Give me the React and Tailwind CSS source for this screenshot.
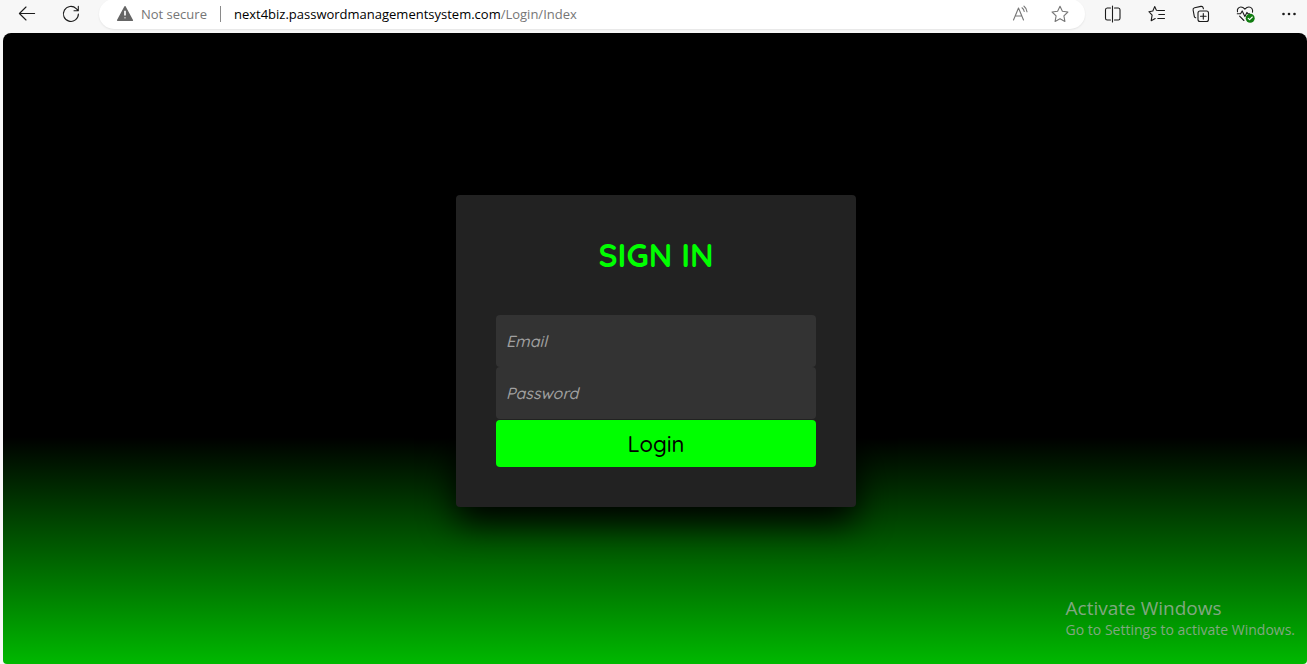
import React from "react";

function Icon({ children, className = "text-[#1b1b1b]" }) {
  return (
    <svg
      viewBox="0 0 20 20"
      className={`h-5 w-5 shrink-0 ${className}`}
      fill="none"
      stroke="currentColor"
      strokeWidth="1.1"
      strokeLinecap="round"
      strokeLinejoin="round"
      aria-hidden="true"
    >
      {children}
    </svg>
  );
}

function ToolButton({ label, children }) {
  return (
    <button type="button" aria-label={label} className="flex h-7 w-9 shrink-0 items-center justify-center rounded">
      {children}
    </button>
  );
}

function Toolbar() {
  return (
    <header className="flex h-[33px] shrink-0 items-center overflow-hidden bg-[#f7f7f7] pb-[5px] pl-[9px] font-['Open_Sans',sans-serif] text-[13px] leading-5">
      <nav aria-label="History" className="flex gap-2">
        <ToolButton label="Back">
          <Icon>
            <path d="M17.6 9.5H2.6M9 3 2.4 9.5 9 16" />
          </Icon>
        </ToolButton>
        <ToolButton label="Refresh">
          <Icon>
            <path d="M17.4 10a7.5 7.5 0 1 1-2.2-5.4l2 2M17.3 2.4v4.3H13" />
          </Icon>
        </ToolButton>
      </nav>

      <div className="mx-[10px] flex h-[30px] min-w-0 flex-1 items-center rounded-full bg-white pl-4 pr-[15px] shadow-[0_1px_2px_rgba(0,0,0,0.08)]">
        <button type="button" className="flex shrink-0 items-center gap-1.5 text-[#767676]">
          <Icon className="text-[#666666]">
            <path d="M10 2.8 17.3 16.3H2.7Z" fill="currentColor" strokeWidth="1.6" />
            <path d="M10 6.8v4.6M10 13.6v.6" stroke="#fff" strokeWidth="1.7" strokeLinecap="butt" />
          </Icon>
          Not secure
        </button>
        <span className="mx-[13px] h-4 w-px shrink-0 bg-[#8a8a8a]" />
        <a href="#login" className="min-w-0 flex-1 truncate text-[#767676]">
          <span className="text-black">next4biz.passwordmanagementsystem.com</span>/Login/Index
        </a>
        <div className="flex shrink-0 gap-5">
          <button type="button" aria-label="Read aloud">
            <Icon className="text-[#777777]">
              <path d="M3.5 16 8.5 4l5 12M5.1 12h6.8" />
              <path d="M12 3.8c1.2.8 2 2.1 2.2 3.7M14 2.2c1.8 1.4 2.8 3.2 3 5.5" />
            </Icon>
          </button>
          <button type="button" aria-label="Add to favorites">
            <Icon className="text-[#777777]">
              <path d="m10 2.2 2.4 5 5.5.8-4 3.9 1 5.5-4.9-2.6-4.9 2.6 1-5.5-4-3.9 5.5-.8Z" />
            </Icon>
          </button>
        </div>
      </div>

      <div className="flex shrink-0 gap-2">
        <ToolButton label="Split screen">
          <Icon>
            <path d="M7.5 4H4.2A1.8 1.8 0 0 0 2.5 5.8v8.4A1.8 1.8 0 0 0 4.2 16h3.3M11.5 4h3.8a1.8 1.8 0 0 1 1.7 1.8v8.4a1.8 1.8 0 0 1-1.7 1.8h-3.8M9.5 2v16" />
          </Icon>
        </ToolButton>
        <ToolButton label="Favorites">
          <Icon>
            <path d="M17.5 6.5h-6L9.4 6.2 7.7 2.6 5.8 7 1.9 7.7l3.2 3.4-.9 5.6 4-2.1M11.8 10.5h5.7M10.8 14.5h6.7" />
          </Icon>
        </ToolButton>
        <ToolButton label="Collections">
          <Icon>
            <rect x="7" y="7" width="10.5" height="10.5" rx="2" />
            <path d="M12.3 9.5v5.6M9.5 12.3h5.6M4.7 13.8a2 2 0 0 1-1.4-1.5L2.1 6a2 2 0 0 1 1.5-2.3l6.3-1.3a2 2 0 0 1 2.3 1.5l.2.9" />
          </Icon>
        </ToolButton>
        <ToolButton label="Browser essentials">
          <Icon>
            <path d="M2.5 7.8C1.8 4.9 3.7 3 5.9 3c1.7 0 2.9.9 4 2.1C11 3.9 12.200 3 13.900 3c2.500 0 4.300 2.300 3.600 5.100M4.600 12.200l4.300 4.300M2.300 9.800h3.300l1.600-2.900 2.700 5.700 2-4.200 1 1.400h1.600" />
            <circle cx="15.200" cy="14.200" r="4.500" fill="#107c10" stroke="none" />
            <path d="m13.200 14.300 1.400 1.400 2.700-2.700" stroke="#fff" />
          </Icon>
        </ToolButton>
        <ToolButton label="Settings and more">
          <Icon>
            <g fill="currentColor" stroke="none">
              <circle cx="4.5" cy="10" r="1.3" />
              <circle cx="10" cy="10" r="1.3" />
              <circle cx="15.5" cy="10" r="1.3" />
            </g>
          </Icon>
        </ToolButton>
      </div>
    </header>
  );
}

function Field({ id, type, label }) {
  return (
    <input
      id={id}
      type={type}
      aria-label={label}
      placeholder={label}
      className="block h-[52px] w-full rounded bg-[#333333] px-[10px] text-base font-medium text-white outline-none placeholder:italic placeholder:text-[#a0a0a0]"
    />
  );
}

export default function App() {
  return (
    <div className="relative flex min-h-screen flex-col bg-[#f7f7f7] font-['Quicksand','Lato',sans-serif]">
      <Toolbar />
      <main
        id="login"
        className="ml-[3px] flex flex-1 items-center justify-center rounded-t-lg rounded-b-sm bg-linear-to-b/srgb from-black from-64% to-[#00b800] pl-0.5 pt-[5px]"
      >
        <form
          onSubmit={(e) => e.preventDefault()}
          className="w-full max-w-[400px] rounded bg-[#222222] p-10 shadow-[0_15px_35px_#000000]"
        >
          <h1 className="mb-10 text-center text-[32px] font-bold leading-10 text-[#00ff00]">SIGN IN</h1>
          <Field id="email" type="email" label="Email" />
          <Field id="password" type="password" label="Password" />
          <button
            type="submit"
            className="mt-px h-[47px] w-full rounded bg-[#00ff00] text-[22px] font-medium leading-7 text-black"
          >
            Login
          </button>
        </form>
      </main>
      <aside className="pointer-events-none absolute bottom-6 right-3 font-['Open_Sans',sans-serif] text-[#80a880]">
        <p className="text-[19px] leading-6">Activate Windows</p>
        <p className="text-sm leading-5">Go to Settings to activate Windows.</p>
      </aside>
    </div>
  );
}
